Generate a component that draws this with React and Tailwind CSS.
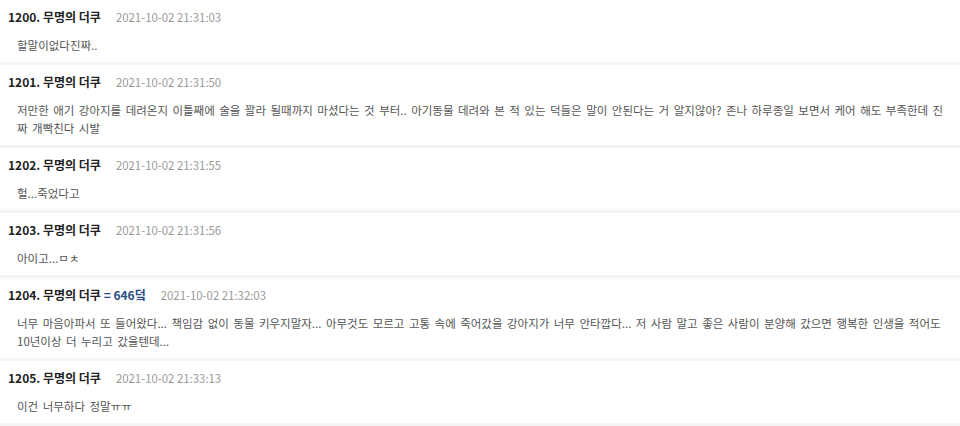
import React from "react";

const items = [
  { no: "1200", date: "2021-10-02 21:31:03", lines: ["할말이없다진짜.."] },
  {
    no: "1201",
    date: "2021-10-02 21:31:50",
    lines: [
      "저만한 애기 강아지를 데려온지 이틀째에 술을 꽐라 될때까지 마셨다는 것 부터.. 아기동물 데려와 본 적 있는 덕들은 말이 안된다는 거 알지않아? 존나 하루종일 보면서 케어 해도 부족한데 진",
      "짜 개빡친다 시발",
    ],
  },
  { no: "1202", date: "2021-10-02 21:31:55", lines: ["헐...죽었다고"] },
  { no: "1203", date: "2021-10-02 21:31:56", lines: ["아이고...ㅁㅊ"] },
  {
    no: "1204",
    extra: "= 646덬",
    date: "2021-10-02 21:32:03",
    lines: [
      "너무 마음아파서 또 들어왔다... 책임감 없이 동물 키우지말자... 아무것도 모르고 고통 속에 죽어갔을 강아지가 너무 안타깝다... 저 사람 말고 좋은 사람이 분양해 갔으면 행복한 인생을 적어도",
      "10년이상 더 누리고 갔을텐데...",
    ],
  },
  { no: "1205", date: "2021-10-02 21:33:13", lines: ["이건 너무하다 정말ㅠㅠ"] },
];

export default function App() {
  return (
    <div
      className="w-[960px] h-[426px] overflow-hidden bg-white"
      style={{ fontFamily: '"Noto Sans CJK KR", "Noto Sans", sans-serif' }}
    >
      {items.map((it) => (
        <div key={it.no} className="border-b-[3px] border-[#f4f4f4] pt-[9px] pb-[8px]">
          <div className="flex items-center pl-[8px] h-[16px]">
            <span className="text-[12px] font-bold text-[#222] leading-[16px] whitespace-nowrap">
              {it.no}. 무명의 더쿠
              {it.extra && <span className="text-[#2b4b86]"> {it.extra}</span>}
            </span>
            <span className="ml-[15px] text-[11.4px] text-[#999] leading-[16px] whitespace-nowrap">
              {it.date}
            </span>
          </div>
          <div className="mt-[11px] pl-[17px] text-[11.5px] leading-[18px] text-[#555] [word-spacing:1.9px]">
            {it.lines.map((l, i) => (
              <div key={i} className="whitespace-nowrap">
                {l}
              </div>
            ))}
          </div>
        </div>
      ))}
    </div>
  );
}
